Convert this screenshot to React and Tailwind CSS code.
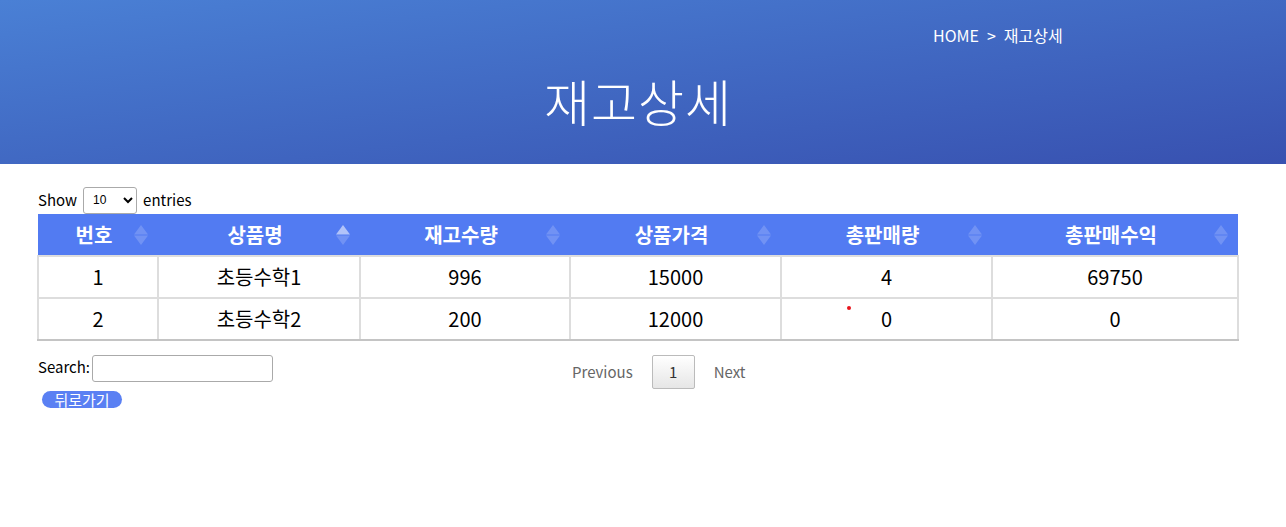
import React from "react";

const columns = [
  { label: "번호", width: "w-[120px]", sort: "none" },
  { label: "상품명", width: "w-[202px]", sort: "asc" },
  { label: "재고수량", width: "w-[210px]", sort: "none" },
  { label: "상품가격", width: "w-[211px]", sort: "none" },
  { label: "총판매량", width: "w-[211px]", sort: "none" },
  { label: "총판매수익", width: "w-[246px]", sort: "none" },
];

const rows = [
  ["1", "초등수학1", "996", "15000", "4", "69750"],
  ["2", "초등수학2", "200", "12000", "0", "0"],
];

function SortIcon({ state }) {
  return (
    <svg width="14" height="20" viewBox="0 0 14 20" className="absolute right-[10px] top-1/2 -translate-y-1/2">
      <path d="M7 0 L14 9.5 L0 9.5 Z" fill="#ffffff" fillOpacity={state === "asc" ? 0.55 : 0.18} />
      <path d="M0 10.5 L14 10.5 L7 20 Z" fill="#ffffff" fillOpacity={0.18} />
    </svg>
  );
}

export default function App() {
  const font = { fontFamily: '"Noto Sans CJK KR", "Noto Sans", sans-serif' };

  return (
    <div className="min-h-screen bg-white" style={font}>
      {/* Header banner */}
      <div className="h-[164px] bg-gradient-to-br from-[#4a80d5] to-[#3851b0] text-white relative">
        <div className="absolute left-[933px] top-[23px] text-[16px] flex gap-[8px] items-center">
          <span>HOME</span>
          <span>&gt;</span>
          <span>재고상세</span>
        </div>
        <div className="pt-[69px] text-center text-[50px] leading-[62px] font-light tracking-[1px] pr-[10px]">
          재고상세
        </div>
      </div>

      <div className="px-[38px] pt-[22px]">
        {/* Show entries */}
        <div className="flex items-center gap-[6px] text-[15px] text-black h-[28px]">
          <span>Show</span>
          <select className="w-[54px] h-[27px] border border-[#aaa] rounded-[3px] text-[12px] px-[5px] bg-white" style={{ fontFamily: '"Liberation Sans", sans-serif' }}>
            <option>10</option>
            <option>25</option>
            <option>50</option>
            <option>100</option>
          </select>
          <span>entries</span>
        </div>

        {/* Table */}
        <table className="-ml-[1px] w-[1202px] border-collapse table-fixed">
          <thead>
            <tr className="bg-[#527bf2] h-[42px] border-b border-[#3e5fcf]">
              {columns.map((c) => (
                <th key={c.label} className={`${c.width} relative text-white font-bold text-[20px] text-center pl-[10px] pr-[18px]`}>
                  {c.label}
                  <SortIcon state={c.sort} />
                </th>
              ))}
            </tr>
          </thead>
          <tbody>
            {rows.map((r, i) => (
              <tr key={i} className="h-[42px]">
                {r.map((v, j) => (
                  <td
                    key={j}
                    className={`border-2 border-[#dddddd] text-center text-[20px] text-black relative ${i === rows.length - 1 ? "border-b-[#c4c4c4]" : ""}`}
                  >
                    {v}
                    {i === 1 && j === 4 && (
                      <span className="absolute left-[65px] top-[7px] w-[4px] h-[4px] rounded-full bg-[#e8141c]" />
                    )}
                  </td>
                ))}
              </tr>
            ))}
          </tbody>
        </table>

        {/* Search + pagination */}
        <div className="flex mt-[14px] h-[34px]">
          <div className="w-[534px] flex items-start text-[15px] text-black">
            <span className="leading-[24px]">Search:</span>
            <input className="ml-[2px] w-[181px] h-[27px] border border-[#aaa] rounded-[3px]" />
          </div>
          <div className="flex items-center gap-[19px] text-[15px] text-[#666]">
            <span>Previous</span>
            <span className="w-[43px] h-[34px] border border-[#bbb] rounded-[2px] bg-gradient-to-b from-white to-[#e6e6e6] flex items-center justify-center text-[#333]">
              1
            </span>
            <span>Next</span>
          </div>
        </div>

        <button className="mt-[2px] ml-[4px] h-[17px] w-[80px] rounded-full bg-[#5a80f3] text-white text-[15px] leading-[17px] block">
          뒤로가기
        </button>
      </div>
    </div>
  );
}
